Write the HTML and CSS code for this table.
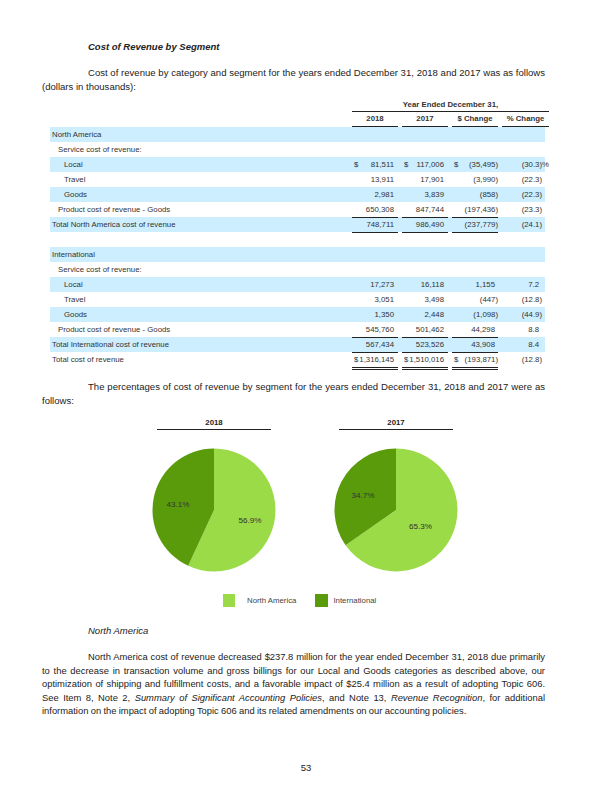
FILE: index.html
```html
<!DOCTYPE html>
<html lang="en">
<head>
    <meta charset="UTF-8">
    <title>Cost of Revenue by Segment</title>
    <link rel="stylesheet" href="styles.css">
</head>
<body>
    <div class="page">
        <h3 class="heading">Cost of Revenue by Segment</h3>
        <p class="para">Cost of revenue by category and segment for the years ended December 31, 2018 and 2017 was as follows (dollars in thousands):</p>

        <div class="fin-table">
            <div class="row head-top">
                <div></div>
                <div class="span-all">Year Ended December 31,</div>
            </div>
            <div class="row head">
                <div></div>
                <div class="ul">2018</div>
                <div class="ul">2017</div>
                <div class="ul">$ Change</div>
                <div class="ul">% Change</div>
            </div>

            <div class="row blue"><div class="lbl l0">North America</div></div>
            <div class="row"><div class="lbl l1">Service cost of revenue:</div></div>
            <div class="row blue">
                <div class="lbl l2">Local</div>
                <div class="num c18 dol"><span>$</span><span>81,511</span></div>
                <div class="num c17 dol"><span>$</span><span>117,006</span></div>
                <div class="num chg dol"><span>$</span><span>(35,495)</span></div>
                <div class="num pct">(30.3)<span class="pc">%</span></div>
            </div>
            <div class="row">
                <div class="lbl l2">Travel</div>
                <div class="num c18">13,911</div>
                <div class="num c17">17,901</div>
                <div class="num chg">(3,990)</div>
                <div class="num pct">(22.3)</div>
            </div>
            <div class="row blue">
                <div class="lbl l2">Goods</div>
                <div class="num c18">2,981</div>
                <div class="num c17">3,839</div>
                <div class="num chg">(858)</div>
                <div class="num pct">(22.3)</div>
            </div>
            <div class="row">
                <div class="lbl l1">Product cost of revenue - Goods</div>
                <div class="num c18 ul">650,308</div>
                <div class="num c17 ul">847,744</div>
                <div class="num chg ul">(197,436)</div>
                <div class="num pct">(23.3)</div>
            </div>
            <div class="row blue">
                <div class="lbl l0">Total North America cost of revenue</div>
                <div class="num c18 ul">748,711</div>
                <div class="num c17 ul">986,490</div>
                <div class="num chg ul">(237,779)</div>
                <div class="num pct">(24.1)</div>
            </div>
            <div class="row"></div>

            <div class="row blue"><div class="lbl l0">International</div></div>
            <div class="row"><div class="lbl l1">Service cost of revenue:</div></div>
            <div class="row blue">
                <div class="lbl l2">Local</div>
                <div class="num c18">17,273</div>
                <div class="num c17">16,118</div>
                <div class="num chg pos">1,155</div>
                <div class="num pct pos">7.2</div>
            </div>
            <div class="row">
                <div class="lbl l2">Travel</div>
                <div class="num c18">3,051</div>
                <div class="num c17">3,498</div>
                <div class="num chg">(447)</div>
                <div class="num pct">(12.8)</div>
            </div>
            <div class="row blue">
                <div class="lbl l2">Goods</div>
                <div class="num c18">1,350</div>
                <div class="num c17">2,448</div>
                <div class="num chg">(1,098)</div>
                <div class="num pct">(44.9)</div>
            </div>
            <div class="row">
                <div class="lbl l1">Product cost of revenue - Goods</div>
                <div class="num c18 ul">545,760</div>
                <div class="num c17 ul">501,462</div>
                <div class="num chg pos ul">44,298</div>
                <div class="num pct pos">8.8</div>
            </div>
            <div class="row blue">
                <div class="lbl l0">Total International cost of revenue</div>
                <div class="num c18 ul">567,434</div>
                <div class="num c17 ul">523,526</div>
                <div class="num chg pos ul">43,908</div>
                <div class="num pct pos">8.4</div>
            </div>
            <div class="row">
                <div class="lbl l0">Total cost of revenue</div>
                <div class="num c18 dol dbl"><span>$</span><span>1,316,145</span></div>
                <div class="num c17 dol dbl"><span>$</span><span>1,510,016</span></div>
                <div class="num chg dol dbl"><span>$</span><span>(193,871)</span></div>
                <div class="num pct">(12.8)</div>
            </div>
        </div>

        <p class="para">The percentages of cost of revenue by segment for the years ended December 31, 2018 and 2017 were as follows:</p>

        <div class="charts">
            <div class="chart">
                <div class="chart-title">2018</div>
                <svg class="pie" width="124" height="124" viewBox="0 0 124 124">
                    <path class="na" d="M62,62 L62,0.5 A61.5,61.5 0 1 1 36.16,117.81 Z"/>
                    <path class="intl" d="M62,62 L36.16,117.81 A61.5,61.5 0 0 1 62,0.5 Z"/>
                    <text x="26" y="58.5">43.1%</text>
                    <text x="98" y="74.5">56.9%</text>
                </svg>
            </div>
            <div class="chart">
                <div class="chart-title">2017</div>
                <svg class="pie" width="124" height="124" viewBox="0 0 124 124">
                    <path class="na" d="M62,62 L62,0.5 A61.5,61.5 0 1 1 11.56,97.18 Z"/>
                    <path class="intl" d="M62,62 L11.56,97.18 A61.5,61.5 0 0 1 62,0.5 Z"/>
                    <text x="29" y="49.5">34.7%</text>
                    <text x="86.5" y="80.5">65.3%</text>
                </svg>
            </div>
        </div>
        <div class="legend">
            <span class="swatch sw-na"></span><span class="legend-text">North America</span>
            <span class="swatch sw-intl"></span><span class="legend-text">International</span>
        </div>

        <h4 class="subheading">North America</h4>
        <p class="para lines">
            <span class="line first">North America cost of revenue decreased $237.8 million for the year ended December 31, 2018 due primarily</span>
            <span class="line">to the decrease in transaction volume and gross billings for our Local and Goods categories as described above, our</span>
            <span class="line">optimization of shipping and fulfillment costs, and a favorable impact of $25.4 million as a result of adopting Topic 606.</span>
            <span class="line">See Item 8, Note 2, <em>Summary of Significant Accounting Policies</em>, and Note 13, <em>Revenue Recognition</em>, for additional</span>
            <span class="line last">information on the impact of adopting Topic 606 and its related amendments on our accounting policies.</span>
        </p>

        <div class="page-num">53</div>
    </div>
</body>
</html>
```

FILE: styles.css
```css
* {
    padding: 0;
    margin: 0;
    box-sizing: border-box;
}

body {
    background: #fff;
    font-family: "Liberation Sans", Arial, sans-serif;
    color: #222;
}

.page {
    width: 612px;
    height: 792px;
    padding: 40px 67px 0 42px;
}

.heading {
    font-size: 9.5px;
    font-weight: bold;
    font-style: italic;
    line-height: 13px;
    padding-left: 46px;
}

.para {
    font-size: 9.55px;
    line-height: 13.5px;
    text-indent: 46px;
    text-align: justify;
    margin-top: 13px;
}

/* paragraph set line by line, as in the filing */
.lines {
    text-indent: 0;
    font-size: 9.4px;
    word-spacing: -0.3px;
}

.line {
    display: block;
    white-space: nowrap;
    text-align: justify;
    text-align-last: justify;
}

.line.first {
    padding-left: 46px;
}

.line.last {
    text-align-last: left;
}

/* table */
.fin-table {
    margin-top: 5px;
    font-size: 7.8px;
    color: #333;
}

.row {
    display: grid;
    grid-template-columns: 298px 46px 46px 46px 47px;
    column-gap: 4px;
    height: 15px;
    margin-left: 8px;
    align-items: stretch;
}

.row > div {
    line-height: 15px;
    white-space: nowrap;
}

.blue {
    background: #cceeff;
}

.head-top {
    height: 14px;
}

.head-top > div {
    line-height: 13px;
}

.span-all {
    grid-column: 2 / 6;
    text-align: center;
    font-weight: bold;
    border-bottom: 1px solid #222;
}

.head > div {
    font-weight: bold;
    text-align: center;
    line-height: 14px;
}

.ul {
    border-bottom: 1px solid #222;
}

.lbl.l0 { padding-left: 2px; }
.lbl.l1 { padding-left: 8px; }
.lbl.l2 { padding-left: 14px; }

.num {
    text-align: right;
}

.c18, .c17 {
    padding-right: 4px;
}

.pos {
    padding-right: 3px;
}

.pct {
    padding-right: 7px;
}

.pct.pos {
    padding-right: 10px;
}

.pc {
    margin-right: -7px;
}

.dol {
    display: flex;
    justify-content: space-between;
    padding-left: 2px;
}

.dbl {
    border-bottom: 3px double #222;
}

/* charts */
.charts {
    display: flex;
    gap: 68px;
    margin-top: 10px;
    margin-left: 115px;
}

.chart {
    width: 114px;
    display: flex;
    flex-direction: column;
    align-items: center;
}

.chart-title {
    width: 114px;
    text-align: center;
    font-size: 7.8px;
    font-weight: bold;
    line-height: 12px;
    border-bottom: 1px solid #222;
}

.pie {
    margin-top: 18px;
}

.pie .na {
    fill: #9bdb47;
}

.pie .intl {
    fill: #5a9b0b;
}

.pie text {
    font-family: "Liberation Sans", Arial, sans-serif;
    font-size: 8.1px;
    fill: #333;
    text-anchor: middle;
}

.legend {
    display: flex;
    align-items: center;
    margin-top: 22px;
    margin-left: 181px;
    height: 13px;
}

.swatch {
    width: 12px;
    height: 13px;
    display: inline-block;
}

.sw-na {
    background: #9bdb47;
}

.sw-intl {
    background: #5a9b0b;
    margin-left: 19px;
    width: 13px;
}

.legend-text {
    font-size: 7.8px;
    color: #444;
    margin-left: 12px;
}

.sw-intl + .legend-text {
    margin-left: 5px;
}

.subheading {
    font-size: 9.5px;
    font-weight: normal;
    font-style: italic;
    line-height: 13px;
    padding-left: 46px;
    margin-top: 17px;
}

.page-num {
    font-size: 9.5px;
    text-align: center;
    margin-top: 44px;
    margin-left: -42px;
    margin-right: -67px;
}
```
